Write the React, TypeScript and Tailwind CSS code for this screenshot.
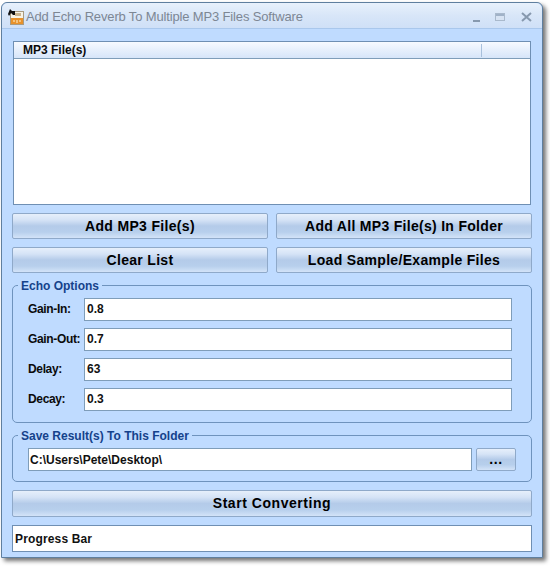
import React from "react";

const font = { fontFamily: '"Liberation Sans", Arial, sans-serif' };

function GlossButton({ label, className = "" }: { label: string; className?: string }) {
  return (
    <button className={`flex items-center justify-center rounded-[2px] border border-[#8fa9c9] bg-[linear-gradient(to_bottom,#e6effb_0%,#d5e3f6_25%,#b4cbe9_50%,#b7cfec_75%,#d3e3f8_100%)] text-[14px] font-bold text-black ${className}`}>
      {label}
    </button>
  );
}

function OptionRow({ label, value }: { label: string; value: string }) {
  return (
    <div className="flex h-[23px] items-center">
      <span className="w-[56px] pb-[2px] text-[12px] font-bold tracking-[-0.35px] text-[#0b0b0b]">{label}</span>
      <div className="flex h-[23px] w-[428px] items-center border border-[#7f9db9] bg-white pb-[2px] pl-[2px] text-[12px] font-bold text-[#111]">{value}</div>
    </div>
  );
}

function GroupBox({ title, className = "", children }: { title: string; className?: string; children: React.ReactNode }) {
  return (
    <div className={`relative rounded-[5px] border border-[#6f93bd] ${className}`}>
      <span className="absolute left-[5px] top-[-7px] bg-[#bfdbff] px-[3px] text-[12px] font-bold leading-[14px] text-[#15428b]">{title}</span>
      {children}
    </div>
  );
}

export default function App() {
  return (
    <div className="h-[567px] w-[550px] bg-white pl-[1px] pt-[2px]" style={font}>
      <div className="flex h-[556px] w-[542px] flex-col rounded-t-[6px] border border-[#5f7f9f] bg-[#bfdbff] shadow-[3px_3px_4px_rgba(0,0,0,0.55)]">
        {/* title bar */}
        <div className="flex h-[25px] shrink-0 items-center rounded-t-[6px] bg-[linear-gradient(to_bottom,#e8f1fc,#d8e6f8_50%,#cfe0f7)] pl-[5px] pr-[10px]">
          <svg width="18" height="18" viewBox="0 0 18 18" className="mt-[2px] shrink-0">
            <rect x="3.5" y="3.5" width="13" height="13" fill="#f7f3e6" stroke="#a89a80" />
            <rect x="4" y="10" width="12" height="6" fill="#e8912a" />
            <path d="M6 13h2M10 12v3M12 13h2" stroke="#fff3d0" strokeWidth="1" />
            <path d="M1 6 L3 1 L5 3 L8 3 L8 7 L6 7 L4 5 L2 8 Z" fill="#111" />
            <rect x="8" y="5" width="6" height="3" fill="#c9b48f" />
          </svg>
          <span className="ml-[1px] mt-[3px] whitespace-nowrap text-[13px] tracking-[-0.15px] text-[#7d8794]">Add Echo Reverb To Multiple MP3 Files Software</span>
          <div className="ml-auto mt-[3px] flex items-center">
            <svg width="9" height="9" viewBox="0 0 9 9" className="mr-[14px] mt-[3px]">
              <rect x="1" y="6" width="7" height="2" fill="#8799ae" />
            </svg>
            <svg width="11" height="9" viewBox="0 0 11 9" className="mr-[15px]">
              <rect x="0.5" y="0.5" width="9" height="7" fill="#d7e3f3" stroke="#a9b9cc" />
              <rect x="1" y="1" width="8" height="2" fill="#a0b2c8" />
            </svg>
            <svg width="11" height="10" viewBox="0 0 11 10">
              <path d="M1 1l9 8M10 1l-9 8" stroke="#8799ae" strokeWidth="2" />
            </svg>
          </div>
        </div>

        <div className="flex flex-1 flex-col border-t border-[#a9c7ec] px-[10px] pt-[12px]">
          {/* list */}
          <div className="ml-[1px] h-[164px] w-[518px] border border-[#6f8fb3] bg-white">
            <div className="flex h-[17px] items-center border-b border-[#7f9db9] bg-[linear-gradient(to_bottom,#f7faff,#d6e5f9)]">
              <span className="w-[467px] pl-[9px] text-[12px] font-bold text-[#0b0b0b]">MP3 File(s)</span>
              <span className="h-[13px] w-px bg-[#a8c0dc]" />
            </div>
          </div>

          <div className="mt-[8px] grid grid-cols-2 gap-x-[8px] gap-y-[8px]">
            <GlossButton label="Add MP3 File(s)" className="h-[26px] tracking-[0.33px]" />
            <GlossButton label="Add All MP3 File(s) In Folder" className="h-[26px] tracking-[0.3px]" />
            <GlossButton label="Clear List" className="h-[26px] tracking-[0.3px]" />
            <GlossButton label="Load Sample/Example Files" className="h-[26px] tracking-[0.32px]" />
          </div>

          <GroupBox title="Echo Options" className="mt-[12px] flex h-[138px] flex-col gap-[7px] pl-[15px] pt-[12px]">
            <OptionRow label="Gain-In:" value="0.8" />
            <OptionRow label="Gain-Out:" value="0.7" />
            <OptionRow label="Delay:" value="63" />
            <OptionRow label="Decay:" value="0.3" />
          </GroupBox>

          <GroupBox title="Save Result(s) To This Folder" className="mt-[12px] flex h-[47px] items-start pl-[15px] pt-[12px]">
            <div className="flex h-[23px] w-[444px] items-center border border-[#7f9db9] bg-white pl-[1px] text-[12px] font-bold text-[#111]">C:\Users\Pete\Desktop\</div>
            <GlossButton label="..." className="ml-[4px] h-[23px] w-[40px] tracking-[0.6px]" />
          </GroupBox>

          <GlossButton label="Start Converting" className="mt-[8px] h-[27px] w-full tracking-[0.55px]" />

          <div className="mt-[8px] flex h-[27px] items-center border border-[#6f8fb3] bg-white pl-[2px] text-[12px] font-bold tracking-[0.15px] text-[#111]">Progress Bar</div>
        </div>
      </div>
    </div>
  );
}
